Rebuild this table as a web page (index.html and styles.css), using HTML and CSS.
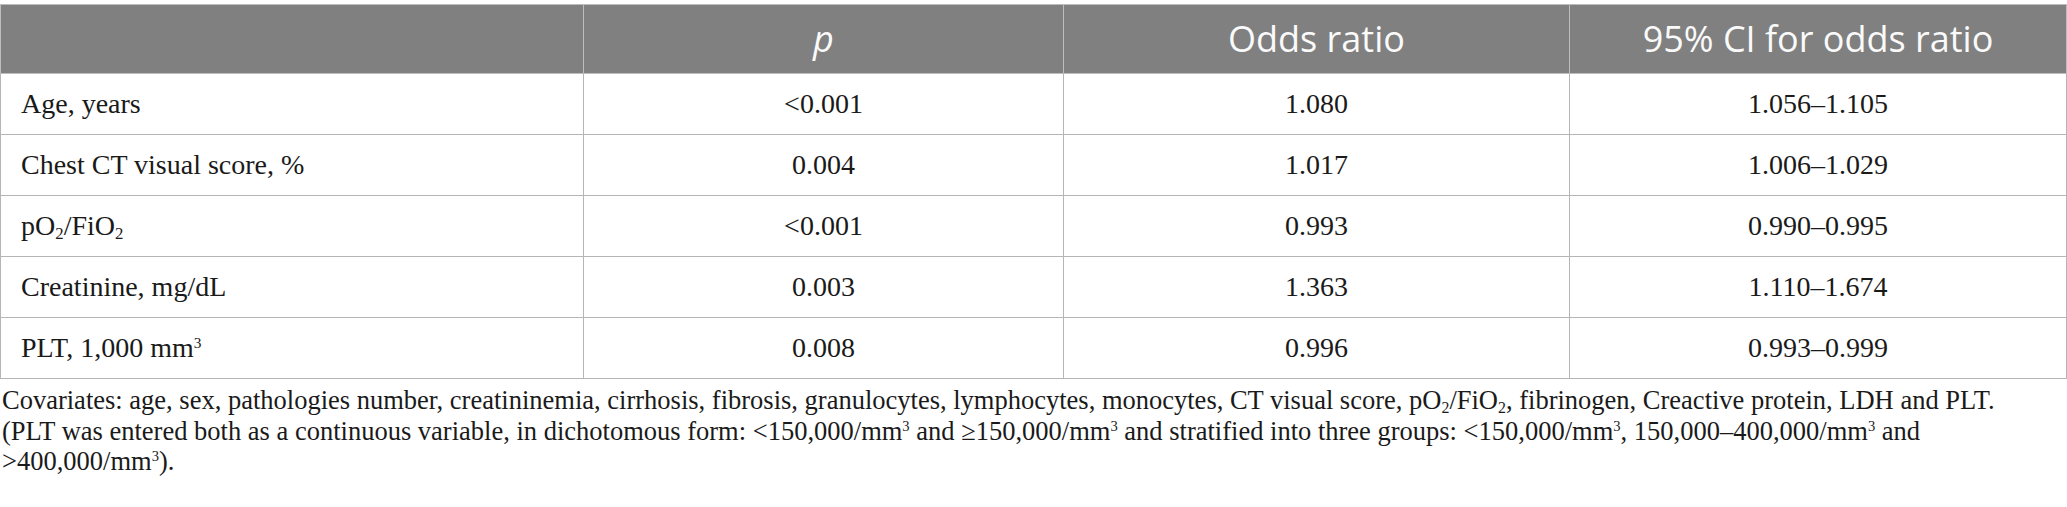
FILE: index.html
```html
<!DOCTYPE html>
<html lang="en">
<head>
<meta charset="utf-8">
<title>Table</title>
<link rel="stylesheet" href="styles.css">
</head>
<body>
<div class="wrap">
<table class="data">
  <colgroup>
    <col class="c1"><col class="c2"><col class="c3"><col class="c4">
  </colgroup>
  <thead>
    <tr>
      <th></th>
      <th><em>p</em></th>
      <th>Odds ratio</th>
      <th>95% CI for odds ratio</th>
    </tr>
  </thead>
  <tbody>
    <tr><td>Age, years</td><td>&lt;0.001</td><td>1.080</td><td>1.056–1.105</td></tr>
    <tr><td>Chest CT visual score, %</td><td>0.004</td><td>1.017</td><td>1.006–1.029</td></tr>
    <tr><td>pO<sub>2</sub>/FiO<sub>2</sub></td><td>&lt;0.001</td><td>0.993</td><td>0.990–0.995</td></tr>
    <tr><td>Creatinine, mg/dL</td><td>0.003</td><td>1.363</td><td>1.110–1.674</td></tr>
    <tr><td>PLT, 1,000 mm<sup>3</sup></td><td>0.008</td><td>0.996</td><td>0.993–0.999</td></tr>
  </tbody>
</table>
<div class="notes">
  <p>Covariates: age, sex, pathologies number, creatininemia, cirrhosis, fibrosis, granulocytes, lymphocytes, monocytes, CT visual score, pO<sub>2</sub>/FiO<sub>2</sub>, fibrinogen, Creactive protein, LDH and PLT.</p>
  <p>(PLT was entered both as a continuous variable, in dichotomous form: &lt;150,000/mm<sup>3</sup> and ≥150,000/mm<sup>3</sup> and stratified into three groups: &lt;150,000/mm<sup>3</sup>, 150,000–400,000/mm<sup>3</sup> and &gt;400,000/mm<sup>3</sup>).</p>
</div>
</div>
</body>
</html>
```
FILE: styles.css
```css
html, body {
  margin: 0;
  padding: 0;
  background: #ffffff;
}
.wrap {
  padding-top: 4px;
  width: 2066px;
}
.data {
  border-collapse: collapse;
  width: 2066px;
  table-layout: fixed;
  font-family: "Liberation Serif", "Times New Roman", serif;
  color: #1a1a1a;
}
.c1 { width: 583px; }
.c2 { width: 480px; }
.c3 { width: 506px; }
.c4 { width: 497px; }
.data th {
  background: #808080;
  color: #fafafa;
  font-family: "Open Sans", "Liberation Sans", sans-serif;
  font-weight: 400;
  font-size: 36px;
  line-height: 1;
  height: 68px;
  padding: 0;
  border: 1px solid #bdbdbd;
  text-align: center;
  vertical-align: middle;
}
.data th em {
  font-style: italic;
}
.data td {
  height: 60px;
  padding: 0 12px;
  font-size: 28px;
  border: 1px solid #b5b5b5;
  text-align: center;
  vertical-align: middle;
}
.data td:first-child {
  text-align: left;
  padding-left: 20px;
}
.data sub, .notes sub {
  font-size: 0.6em;
  vertical-align: -0.25em;
  line-height: 0;
}
.data sup, .notes sup {
  font-size: 0.55em;
  vertical-align: 0.6em;
  line-height: 0;
}
.notes {
  width: 2050px;
  padding: 6px 2px 0;
  font-family: "Liberation Serif", "Times New Roman", serif;
  font-size: 26.5px;
  line-height: 30.5px;
  color: #1a1a1a;
}
.notes p {
  margin: 0;
}
```
